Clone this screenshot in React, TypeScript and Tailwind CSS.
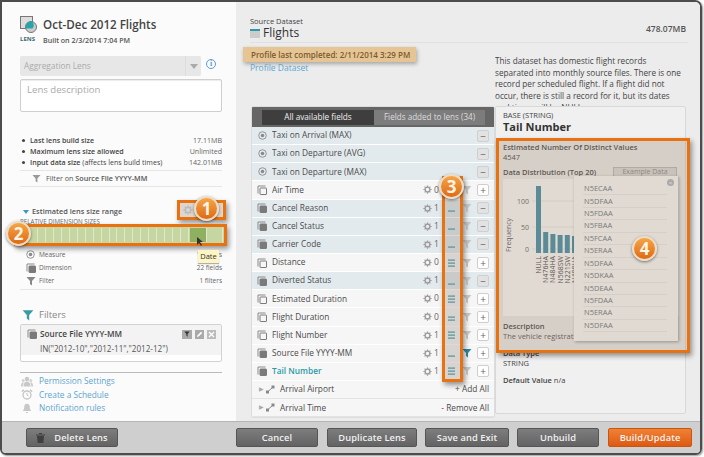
// Lens builder screenshot: left lens panel, source dataset fields table,
// field detail panel, and the numbered orange call-outs on top.
import type { ReactNode } from "react";

type Field = { name: string; kind: "measure" | "dim" | "group"; added?: boolean; num?: number; lines?: number; filter?: boolean; right?: string; accent?: boolean };

const fields: Field[] = [
  { name: "Taxi on Arrival (MAX)", kind: "measure", added: true },
  { name: "Taxi on Departure (AVG)", kind: "measure", added: true },
  { name: "Taxi on Departure (MAX)", kind: "measure", added: true },
  { name: "Air Time", kind: "dim", num: 0, lines: 3 },
  { name: "Cancel Reason", kind: "dim", added: true, num: 1, lines: 1 },
  { name: "Cancel Status", kind: "dim", added: true, num: 1, lines: 1 },
  { name: "Carrier Code", kind: "dim", added: true, num: 1, lines: 1 },
  { name: "Distance", kind: "dim", num: 0, lines: 3 },
  { name: "Diverted Status", kind: "dim", added: true, num: 1, lines: 1 },
  { name: "Estimated Duration", kind: "dim", num: 0, lines: 3 },
  { name: "Flight Duration", kind: "dim", num: 0, lines: 2 },
  { name: "Flight Number", kind: "dim", num: 1, lines: 3 },
  { name: "Source File YYYY-MM", kind: "dim", num: 1, lines: 1, filter: true },
  { name: "Tail Number", kind: "dim", num: 1, lines: 3, accent: true },
  { name: "Arrival Airport", kind: "group", right: "+ Add All" },
  { name: "Arrival Time", kind: "group", right: "- Remove All" },
];

const popupValues = ["N5ECAA", "N5DFAA", "N5FDAA", "N5FBAA", "N5FCAA", "N5ERAA", "N5DFAA", "N5DKAA", "N5DEAA", "N5FDAA", "N5ERAA", "N5DFAA"];

const bars = [67, 21, 19, 18, 18, 17, 16, 15, 14, 13];
const barLabels = ["NULL", "N476HA", "N484HA", "N568SW", "N221SW", "N488HA", "N483HA", "N477HA", "N480HA", "N475HA"];

function Gear({ size = 11, color = "#9a9a9a" }: { size?: number; color?: string }) {
  return (
    <svg width={size} height={size} viewBox="0 0 12 12" className="shrink-0">
      <circle cx="6" cy="6" r="3.2" fill="none" stroke={color} strokeWidth="1.8" />
      <path d="M6 .5v2M6 9.5v2M.5 6h2M9.5 6h2M2.1 2.1l1.4 1.4M8.5 8.5l1.4 1.4M9.9 2.1L8.5 3.5M3.5 8.5L2.1 9.9" stroke={color} strokeWidth="1.6" />
    </svg>
  );
}

function MeasureIcon() {
  return (
    <svg width="9" height="9" viewBox="0 0 10 10" className="mx-[0.5px] shrink-0">
      <circle cx="5" cy="5" r="4.2" fill="none" stroke="#8a8a8a" />
      <circle cx="5" cy="5" r="2" fill="#8a8a8a" />
    </svg>
  );
}

function DimIcon({ filled }: { filled?: boolean }) {
  return (
    <svg width="10" height="10" viewBox="0 0 10 10" className="shrink-0">
      <path d="M1 8.5V1h7.5" fill="none" stroke="#8a8a8a" />
      <rect x="3" y="3" width="6.5" height="6.5" rx="0.5" fill={filled ? "#7a7a7a" : "#f6f6f6"} stroke="#7a7a7a" />
    </svg>
  );
}

function FunnelIcon({ color = "#b9b9b9", size = 10 }: { color?: string; size?: number }) {
  return (
    <svg width={size} height={size} viewBox="0 0 10 10" className="shrink-0">
      <path d="M.5 1h9L6 5v4.5L4 8V5z" fill={color} />
    </svg>
  );
}

function LinesIcon({ count }: { count: number }) {
  return (
    <svg width="7" height="8" viewBox="0 0 7 8" className="shrink-0">
      <rect y="6.5" width="7" height="1.2" fill="#3f9aa8" />
      {count > 1 && <rect y="3.5" width="7" height="1.2" fill="#3f9aa8" />}
      {count > 2 && <rect y="0.5" width="7" height="1.2" fill="#3f9aa8" />}
    </svg>
  );
}

function SquareBtn({ added }: { added?: boolean }) {
  return (
    <span className={`flex h-[12px] w-[12px] shrink-0 items-center justify-center rounded-[2px] border border-[#cfcfcf] text-[10px] leading-none text-[#666] ${added ? "bg-[#e2e2e2]" : "bg-white"}`}>
      {added ? "−" : "+"}
    </span>
  );
}

function FieldRow({ f }: { f: Field }) {
  if (f.kind === "group") {
    return (
      <div className="flex h-[18.2px] items-center border-b border-[#e4e4e4] bg-[#f6f6f6] pl-[7px] pr-[5px] text-[8.3px] text-[#4a4a4a]">
        <span className="mr-[2px] text-[6px] text-[#aaa]">▶</span>
        <svg width="9" height="9" viewBox="0 0 9 9" className="mr-[5px] shrink-0">
          <rect x="0" y="5.5" width="3" height="3" fill="#888" />
          <rect x="5.5" y="0.5" width="3" height="3" fill="#888" />
          <path d="M2.5 6L6 3" stroke="#888" />
        </svg>
        <span className="flex-1">{f.name}</span>
        <span>{f.right}</span>
      </div>
    );
  }
  const tinted = f.added;
  return (
    <div className={`flex h-[18.15px] items-center border-b border-white pl-[5px] pr-[5px] text-[8.3px] ${tinted ? "bg-[#e3eaee]" : "bg-[#f6f6f6]"}`}>
      {f.kind === "measure" ? <MeasureIcon /> : <DimIcon filled={tinted || f.filter || f.accent} />}
      <span className={`ml-[5px] flex-1 truncate ${f.accent ? "font-semibold text-[#2b9aa6]" : "text-[#4a4a4a]"}`}>{f.name}</span>
      {f.kind === "dim" && (
        <>
          <Gear size={9} />
          <span className="ml-[2px] w-[6px] text-[8.5px] text-[#666]">{f.num}</span>
          <span className="ml-[7px] flex w-[8px] justify-center">
            <LinesIcon count={f.lines ?? 1} />
          </span>
          <span className="ml-[7px] flex w-[10px] justify-center">
            <FunnelIcon color={f.filter ? "#2b8aa0" : "#c9c9c9"} />
          </span>
          <span className="w-[5px]" />
        </>
      )}
      <SquareBtn added={f.added} />
    </div>
  );
}

function Badge({ n, className }: { n: number; className: string }) {
  return (
    <span className={`absolute flex h-[25px] w-[25px] items-center justify-center rounded-full border-2 border-[#ecdcc6] bg-gradient-to-b from-[#f6a545] to-[#dd6a10] text-[17px] font-bold leading-none text-[#fff4e6] shadow-[0_1px_3px_rgba(0,0,0,0.5)] ${className}`}>
      {n}
    </span>
  );
}

function Callout({ className, children }: { className: string; children?: ReactNode }) {
  return <div className={`absolute border-[3px] border-[#e8720f] shadow-[2px_3px_5px_rgba(0,0,0,0.4)] ${className}`}>{children}</div>;
}

function Stat({ label, note, value }: { label: string; note?: string; value: string }) {
  return (
    <li className="flex h-[11px] items-center pl-[2px] text-[7.1px] text-[#444]">
      <span className="mr-[5px] h-[3px] w-[3px] rounded-full bg-[#444]" />
      <span className="flex-1 whitespace-nowrap">
        <span className="font-semibold">{label}</span>
        {note && <span> {note}</span>}
      </span>
      <span className="text-[#666]">{value}</span>
    </li>
  );
}

function SizeRow({ icon, label, value }: { icon: ReactNode; label: string; value: string }) {
  return (
    <div className="flex h-[13px] items-center pl-[4px] text-[6.5px] text-[#666]">
      <span className="flex w-[13px] justify-center">{icon}</span>
      <span className="ml-[2px] flex-1">{label}</span>
      <span>{value}</span>
    </div>
  );
}

function LinkRow({ icon, children }: { icon: ReactNode; children: string }) {
  return (
    <div className="flex h-[13.3px] items-center text-[8.3px] text-[#5da5d0]">
      <span className="ml-[1px] mr-[6px] flex w-[12px] justify-center">{icon}</span>
      {children}
    </div>
  );
}

function FooterBtn({ children, className, primary }: { children: ReactNode; className: string; primary?: boolean }) {
  return (
    <button className={`flex h-[19px] items-center justify-center rounded-[2px] border text-[9.3px] font-semibold tracking-[0.1px] text-[#f1f1f1] ${primary ? "border-[#c9560f] bg-gradient-to-b from-[#f08135] to-[#dd5a10]" : "border-[#555] bg-gradient-to-b from-[#7d7d7d] to-[#636363]"} ${className}`}>
      {children}
    </button>
  );
}

function DistributionChart() {
  return (
    <svg width="176" height="131" viewBox="0 0 176 131" className="block">
      <text x="8" y="56" transform="rotate(-90 8 56)" textAnchor="middle" fontSize="7" fill="#556">Frequency</text>
      {[{ v: "100", y: 22 }, { v: "50", y: 48 }, { v: "0", y: 70 }].map((t) => (
        <g key={t.v}>
          <text x="26" y={t.y + 2.5} textAnchor="end" fontSize="7" fill="#666">{t.v}</text>
          <line x1="29" x2="170" y1={t.y} y2={t.y} stroke="#ddd" strokeWidth="0.6" />
        </g>
      ))}
      {bars.map((h, i) => (
        <rect key={i} x={33 + i * 7.2} y={74 - h} width="5" height={h} fill="#3f8ea8" />
      ))}
      {barLabels.map((l, i) => (
        <text key={l} x={38 + i * 7.2} y={77} transform={`rotate(-90 ${38 + i * 7.2} 77)`} textAnchor="end" fontSize="7" fill="#444">{l}</text>
      ))}
    </svg>
  );
}

export default function App() {
  return (
    <div className="relative h-[457px] w-[704px] overflow-hidden bg-white font-['Open_Sans',sans-serif]">
      <div className="flex h-[455px] w-[702px] flex-col overflow-hidden rounded-tr-[7px] rounded-bl-[6px] rounded-br-[6px] border-2 border-[#4c4c4c] shadow-[1px_1px_2px_rgba(0,0,0,0.4)]">
        <div className="flex min-h-0 flex-1">
          {/* lens panel */}
          <div className="flex w-[234px] shrink-0 flex-col bg-[#fbfbfb] pl-[18px] pr-[12px] pt-[14px]">
            <div className="flex h-[40px]">
              <div className="flex w-[23px] flex-col">
                <svg width="17" height="17" viewBox="0 0 17 17">
                  <rect x="0.5" y="0.5" width="12" height="12" fill="#ddd" stroke="#777" />
                  <circle cx="11" cy="11" r="5.5" fill="#ccc" stroke="#777" />
                  <path d="M12.5 5.7A5.5 5.5 0 0 1 12.5 12.5H5.7A5.5 5.5 0 0 1 12.5 5.7z" fill="#27a5ad" />
                </svg>
                <span className="mt-[3px] text-[6px] font-bold leading-none text-[#3b6a70]">LENS</span>
              </div>
              <div className="flex flex-col">
                <span className="text-[11.6px] font-semibold leading-[18px] text-[#444]">Oct-Dec 2012 Flights</span>
                <span className="text-[7.1px] font-semibold leading-[12px] text-[#555]">Built on 2/3/2014 7:04 PM</span>
              </div>
            </div>
            <div className="flex items-center">
              <div className="flex h-[20px] w-[181px] items-center rounded-[2px] bg-[#e7e7e7] pl-[4px] text-[8.3px] text-[#aaa]">
                <span className="flex-1">Aggregation Lens</span>
                <span className="flex h-full w-[16px] items-center justify-center border-l border-[#ddd]">
                  <span className="h-0 w-0 border-x-[4px] border-t-[5px] border-x-transparent border-t-[#aaa]" />
                </span>
              </div>
              <span className="ml-[5px] -mt-[4px] flex h-[10px] w-[10px] items-center justify-center rounded-full border border-[#5b9bd5] font-['Liberation_Serif',serif] text-[8px] font-bold leading-none text-[#5b9bd5]">i</span>
            </div>
            <div className="mt-[3px] h-[33px] w-[202px] rounded-[2px] border border-[#cfcfcf] bg-white pl-[6px] pt-[3px] text-[9.6px] text-[#aaa] shadow-[inset_0_1px_1px_rgba(0,0,0,0.08)]">Lens description</div>
            <ul className="mt-[23px] w-[202px]">
              <Stat label="Last lens build size" value="17.11MB" />
              <Stat label="Maximum lens size allowed" value="Unlimited" />
              <Stat label="Input data size" note="(affects lens build times)" value="142.01MB" />
            </ul>
            <div className="mt-[2px] flex h-[17px] w-[202px] items-center border-y border-[#e6e6e6] pl-[12px] text-[7.2px] text-[#555]">
              <FunnelIcon size={9} color="#999" />
              <span className="ml-[5px]">Filter on <b className="font-semibold">Source File YYYY-MM</b></span>
            </div>
            <div className="mt-[19px] flex h-[12px] items-center pl-[3px] text-[7.4px] font-semibold text-[#555]">
              <span className="mr-[3px] h-0 w-0 border-x-[3px] border-t-[4px] border-x-transparent border-t-[#3c97c9]" />
              Estimated lens size range
            </div>
            <div className="h-[7px] text-[6.2px] leading-[7px] text-[#666]">RELATIVE DIMENSION SIZES</div>
            <div className="mt-[11px] w-[202px] border-b border-[#e6e6e6] pb-[2px]">
              <div className="h-[12px]" />
              <SizeRow icon={<MeasureIcon />} label="Measure" value="12 fields" />
              <SizeRow icon={<DimIcon filled />} label="Dimension" value="22 fields" />
              <SizeRow icon={<FunnelIcon color="#888" />} label="Filter" value="1 filters" />
            </div>
            <div className="mt-[17px] flex h-[16px] items-center pl-[2px]">
              <FunnelIcon size={12} color="#3a9aa8" />
              <span className="ml-[5px] text-[9.5px] text-[#888]">Filters</span>
            </div>
            <div className="mt-[1px] h-[38px] w-[202px] rounded-[2px] border border-[#d2d2d2] bg-white">
              <div className="h-[30px] bg-[#f3f3f3] pl-[6px] pt-[3px]">
                <div className="flex items-center text-[8.2px] font-semibold text-[#444]">
                  <DimIcon filled />
                  <span className="ml-[3px] flex-1">Source File YYYY-MM</span>
                  <span className="mr-[3px] flex h-[9px] w-[10px] items-center justify-center bg-[#aaa]">
                    <FunnelIcon size={6} color="#333" />
                  </span>
                  <span className="mr-[3px] flex h-[9px] w-[9px] items-center justify-center bg-[#aaa]">
                    <svg width="7" height="7" viewBox="0 0 7 7"><path d="M1 6l.4-1.6L5 .8 6.2 2 2.6 5.6z" fill="#fff" /></svg>
                  </span>
                  <span className="mr-[5px] flex h-[9px] w-[9px] items-center justify-center bg-[#bbb]">
                    <svg width="7" height="7" viewBox="0 0 7 7"><path d="M1 1l5 5M6 1L1 6" stroke="#fff" strokeWidth="1.2" /></svg>
                  </span>
                </div>
                <div className="mt-[3px] pl-[13px] text-[8.1px] text-[#555]">IN("2012-10","2012-11","2012-12")</div>
              </div>
            </div>
            <div className="mt-[10px] w-[202px] border-t border-[#bbb] pt-[2px]">
              <LinkRow icon={
                <svg width="12" height="11" viewBox="0 0 12 11">
                  <circle cx="6" cy="3" r="2.2" fill="#c8c8c8" /><circle cx="2.2" cy="4.5" r="1.5" fill="#d2d2d2" /><circle cx="9.8" cy="4.5" r="1.5" fill="#d2d2d2" />
                  <path d="M2.5 10.5c0-3.5 1.4-5 3.5-5s3.5 1.5 3.5 5zM0 10.5c0-2.6.6-4 2-4 .3 0 .6 0 .8.2-.7 1-1.1 2.2-1.1 3.8zM12 10.5c0-2.6-.6-4-2-4-.3 0-.6 0-.8.2.7 1 1.1 2.2 1.1 3.8z" fill="#c8c8c8" />
                </svg>
              }>Permission Settings</LinkRow>
              <LinkRow icon={
                <svg width="12" height="11" viewBox="0 0 12 11">
                  <circle cx="6" cy="6" r="4" fill="none" stroke="#c4c4c4" strokeWidth="1.3" />
                  <path d="M6 3.8V6l1.6 1" fill="none" stroke="#c4c4c4" />
                  <path d="M.8 2.6L3 .8M11.2 2.6L9 .8" stroke="#c4c4c4" strokeWidth="1.4" />
                </svg>
              }>Create a Schedule</LinkRow>
              <LinkRow icon={
                <svg width="12" height="11" viewBox="0 0 12 11">
                  <path d="M6 .8c2 0 2.8 1.6 2.8 3.4 0 2 .8 3 1.7 3.8H1.5c.9-.8 1.7-1.8 1.7-3.8C3.2 2.4 4 .8 6 .8z" fill="#c8c8c8" />
                  <path d="M4.8 9h2.4c0 1.4-2.4 1.4-2.4 0z" fill="#c8c8c8" />
                </svg>
              }>Notification rules</LinkRow>
            </div>
          </div>

          {/* dataset panel */}
          <div className="flex min-w-0 flex-1 flex-col bg-[#ececec] pl-[14px] pr-[12px] pt-[13px]">
            <div className="flex h-[28px] items-end border-b border-[#e0e0e0] pb-[2px]">
              <div className="flex-1">
                <div className="text-[7.5px] leading-[9px] text-[#444]">Source Dataset</div>
                <div className="flex items-center text-[12px] leading-[14px] text-[#333]">
                  <span className="mr-[3px] h-[9px] w-[10px] border-t-2 border-[#2b9aa6] bg-[#ccc]" />
                  Flights
                </div>
              </div>
              <span className="mb-[4px] mr-[2px] text-[8.5px] font-semibold text-[#555]">478.07MB</span>
            </div>
            <div className="flex min-h-0 flex-1">
              <div className="flex w-[245px] shrink-0 flex-col">
                <div className="-ml-[7px] mt-[4px] flex h-[15px] w-[173px] items-center whitespace-nowrap bg-[#e6c595] pl-[8px] pt-[1px] text-[8px] font-semibold text-[#7c5a30] shadow-[1px_2px_4px_rgba(0,0,0,0.3)]">
                  Profile last completed: 2/11/2014 3:29 PM
                </div>
                <div className="text-[8.5px] leading-[11px] text-[#5da5d0]">Profile Dataset</div>
                <div className="ml-[1px] mt-[33px] w-[244px] overflow-hidden rounded-[2px] border border-[#ddd]">
                  <div className="flex h-[20px] items-center bg-[#666] pl-[10px]">
                    <span className="flex h-[15px] w-[112px] items-center justify-center bg-[#3e3e3e] text-[8.2px] text-[#eee]">All available fields</span>
                    <span className="flex h-[15px] w-[111px] items-center justify-center bg-[#7c7c7c] text-[8.1px] text-[#ddd]">Fields added to lens (34)</span>
                  </div>
                  {fields.map((f) => (
                    <FieldRow key={f.name} f={f} />
                  ))}
                </div>
              </div>
              <div className="flex min-w-0 flex-1 flex-col">
                <p className="mt-[12px] h-[51px] w-[190px] overflow-hidden text-[8.2px] leading-[11.7px] text-[#444]">
                  This dataset has domestic flight records separated into monthly source files. There is one record per scheduled flight. If a flight did not occur, there is still a record for it, but its dates and times will be NULL.
                </p>
                <div className="h-[308px] w-[191px] rounded-[2px] border border-[#d8d8d8] bg-[#f0f0f0] pl-[7px] pr-[6px]">
                  <div className="pt-[3px] text-[7.5px] leading-[10px] text-[#444]">BASE (STRING)</div>
                  <div className="text-[11px] font-bold leading-[14px] text-[#333]">Tail Number</div>
                  <div className="mt-[8px] whitespace-nowrap text-[7.5px] font-semibold leading-[10px] text-[#444]">Estimated Number Of Distinct Values</div>
                  <div className="text-[7.5px] leading-[10px] text-[#444]">4547</div>
                  <div className="mt-[4px] flex h-[13px] items-center justify-between pr-[2px]">
                    <span className="text-[7.5px] font-semibold text-[#444]">Data Distribution (Top 20)</span>
                    <span className="flex h-[12px] w-[64px] items-center justify-center border border-[#bbb] bg-[#ddd] text-[7px] text-[#888]">Example Data</span>
                  </div>
                  <div className="h-[137px] bg-white">
                    <DistributionChart />
                  </div>
                  <div className="mt-[5px] text-[7.5px] font-semibold leading-[10px] text-[#444]">Description</div>
                  <div className="truncate text-[7.5px] leading-[10px] text-[#555]">The vehicle registration number of the plane</div>
                  <div className="mt-[7px] text-[7.5px] font-semibold leading-[10px] text-[#444]">Data Type</div>
                  <div className="text-[7.5px] leading-[10px] text-[#444]">STRING</div>
                  <div className="mt-[7px] text-[7.5px] leading-[10px] text-[#444]"><b className="font-semibold">Default Value</b> n/a</div>
                </div>
              </div>
            </div>
          </div>
        </div>

        {/* footer */}
        <div className="flex h-[32px] shrink-0 items-center border-t border-[#b5b5b5] bg-[#cfcfcf] pl-[24px]">
          <FooterBtn className="w-[92px] gap-[9px]">
            <svg width="9" height="10" viewBox="0 0 9 10"><path d="M0 1.5h9v1H0zM1 3h7l-.6 7H1.6zM3 0h3v1H3z" fill="#3f3f3f" /></svg>
            Delete Lens
          </FooterBtn>
          <FooterBtn className="ml-[118px] w-[82px]">Cancel</FooterBtn>
          <FooterBtn className="ml-[9px] w-[90px]">Duplicate Lens</FooterBtn>
          <FooterBtn className="ml-[8px] w-[84px]">Save and Exit</FooterBtn>
          <FooterBtn className="ml-[8px] w-[82px]">Unbuild</FooterBtn>
          <FooterBtn primary className="ml-[9px] w-[84px]">Build/Update</FooterBtn>
        </div>
      </div>

      {/* call-outs */}
      <Callout className="left-[177px] top-[200px] flex h-[20px] w-[49px] items-center bg-[#dcd6cf] pl-[3px]">
        <Gear size={10} color="#bbb" />
      </Callout>

      <Callout className="left-[14px] top-[224px] flex h-[22px] w-[213px] gap-[1px] bg-[#c8d6a6] py-[1px] pl-[14px] pr-[1px]">
        {Array.from({ length: 22 }).map((_, i) => (
          <span key={i} className={`h-full border-r border-[#dfe6cb] ${i === 20 ? "w-[17px] shrink-0 bg-[#8fb060]" : i === 21 ? "w-[15px] shrink-0 bg-[#c6d6a0]" : "flex-1 bg-[#c6d6a0]"}`} />
        ))}
      </Callout>
      <svg width="7" height="9" viewBox="0 0 7 9" className="absolute left-[197px] top-[237px]"><path d="M0 0v8l2-2 2 3 1-1-2-3h3z" fill="#333" /></svg>
      <div className="absolute left-[198px] top-[250px] flex h-[13px] w-[21px] items-center justify-center bg-[#fdf6c4] text-[7.5px] text-[#333] shadow-[0_1px_1px_rgba(0,0,0,0.3)]">Date</div>

      <Callout className="left-[442px] top-[176px] h-[206px] w-[21px] border-t-0 bg-[#8d8076]/30" />

      <Callout className="left-[496px] top-[138px] h-[215px] w-[194px] bg-[#9c836e]/30" />
      <div className="absolute left-[574px] top-[176px] h-[165px] w-[104px] bg-[#e0dad2] pl-[9px] pr-[11px] pt-[7px] shadow-[1px_1px_3px_rgba(0,0,0,0.3)]">
        <span className="absolute right-[4px] top-[3px] flex h-[7px] w-[7px] items-center justify-center rounded-full bg-[#aaa] text-[6px] leading-none text-[#e0dad2]">×</span>
        {popupValues.map((v, i) => (
          <div key={i} className="flex h-[12.45px] items-center border-b border-[#d5cfc7] pl-[1px] text-[7.5px] text-[#7a7a7a]">{v}</div>
        ))}
      </div>

      <Badge n={1} className="left-[194px] top-[196px]" />
      <Badge n={2} className="left-[6px] top-[221px]" />
      <Badge n={3} className="left-[439px] top-[174px]" />
      <Badge n={4} className="left-[632px] top-[236px]" />
    </div>
  );
}
